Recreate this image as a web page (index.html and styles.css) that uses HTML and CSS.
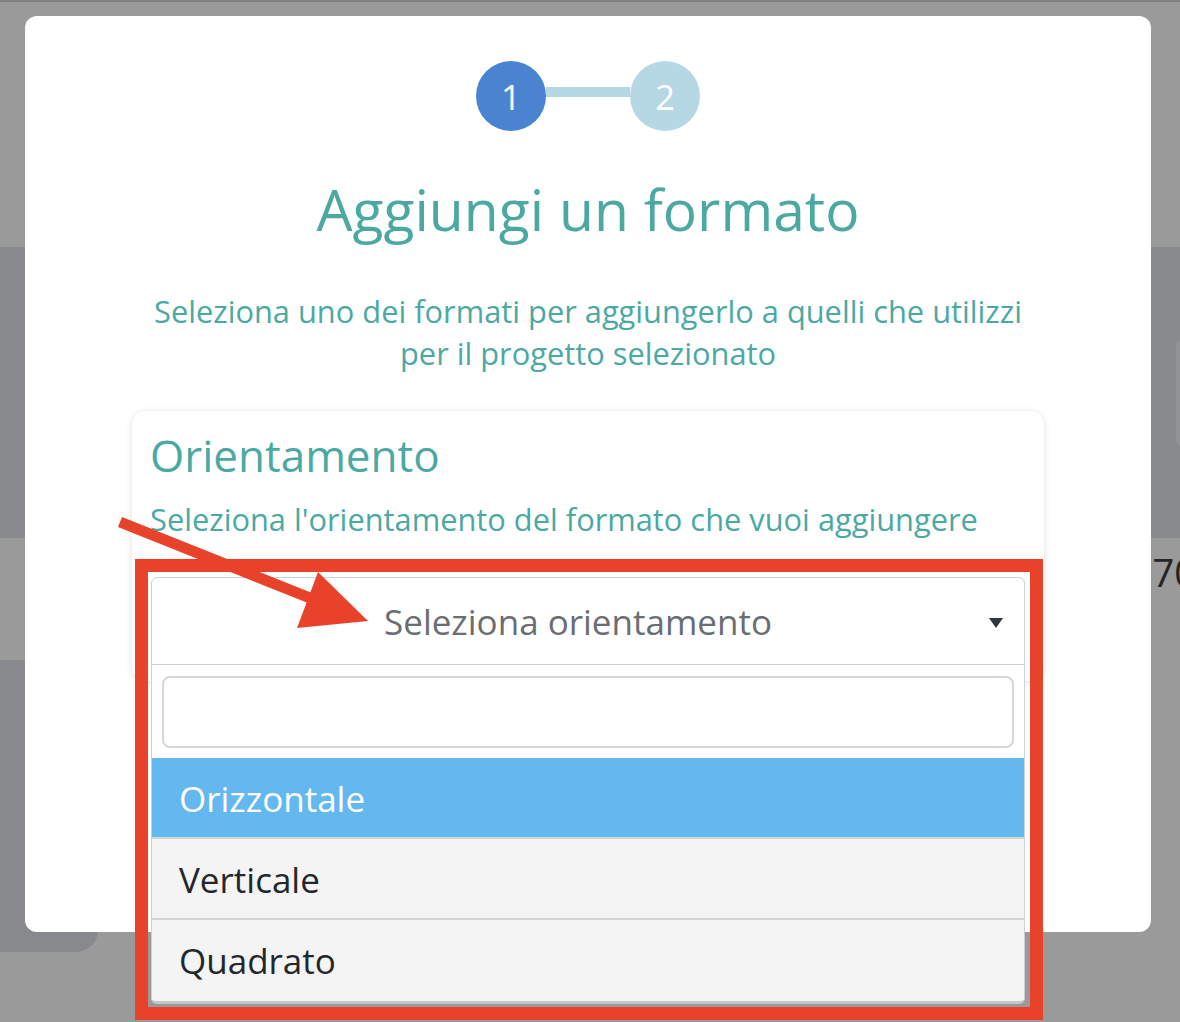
FILE: index.html
```html
<!DOCTYPE html>
<html lang="it">
<head>
    <meta charset="UTF-8">
    <meta name="viewport" content="width=device-width, initial-scale=1.0">
    <title>Aggiungi un formato</title>
    <link rel="stylesheet" href="styles.css">
</head>
<body>
    <!-- page behind the backdrop -->
    <div class="page">
        <div class="page-top"></div>
        <div class="page-hero"><div class="hero-chip"></div></div>
        <div class="page-row"><span class="row-num">70</span></div>
        <div class="page-panel"></div>
    </div>

    <div class="modal">
        <div class="stepper">
            <span class="step active">1</span>
            <span class="step-line"></span>
            <span class="step">2</span>
        </div>

        <h1 class="modal-title">Aggiungi un formato</h1>
        <p class="modal-subtitle">Seleziona uno dei formati per aggiungerlo a quelli che utilizzi per il progetto selezionato</p>

        <div class="card">
            <h2 class="card-title">Orientamento</h2>
            <p class="card-text">Seleziona l'orientamento del formato che vuoi aggiungere</p>

            <div class="select-wrap">
                <div class="select">
                    <span class="select-placeholder">Seleziona orientamento</span>
                    <span class="select-caret"></span>
                </div>
                <div class="dropdown">
                    <div class="dropdown-search"><input type="text"></div>
                    <ul class="options">
                        <li class="option highlighted">Orizzontale</li>
                        <li class="option">Verticale</li>
                        <li class="option">Quadrato</li>
                    </ul>
                </div>
            </div>
        </div>
    </div>

    <!-- annotation drawn over the screenshot -->
    <div class="highlight-box"></div>
    <svg class="arrow" viewBox="0 0 1180 1022" width="1180" height="1022">
        <line x1="120" y1="522" x2="310" y2="598" stroke="#e8432a" stroke-width="11"/>
        <polygon points="368,621 318,572 297,628" fill="#e8432a"/>
    </svg>
</body>
</html>
```

FILE: styles.css
```css
/* General */
* {
    box-sizing: border-box;
}

body {
    margin: 0;
    width: 1180px;
    height: 1022px;
    overflow: hidden;
    position: relative;
    font-family: 'Open Sans', 'Noto Sans', sans-serif;
    background: #9a9a9a;
}

/* Page behind backdrop */
.page-top {
    height: 247px;
    border-top: 2px solid #808080;
    background: #9a9a9a;
}

.page-hero {
    height: 291px;
    background: #88898d;
    display: flex;
    justify-content: flex-end;
    padding-top: 91px;
}

.hero-chip {
    width: 24px;
    height: 109px;
    margin-right: -20px;
    border-radius: 8px;
    background: #929397;
}

.page-row {
    height: 122px;
    display: flex;
    justify-content: flex-end;
    padding-top: 8px;
    background: #9a9a9a;
}

.row-num {
    font-size: 38px;
    color: #242424;
    margin-right: -16px;
}

.page-panel {
    width: 98px;
    height: 292px;
    background: #88898d;
    border-radius: 0 0 22px 0;
}

/* Modal */
.modal {
    position: absolute;
    left: 25px;
    top: 16px;
    width: 1126px;
    height: 916px;
    background: #fff;
    border-radius: 12px;
    padding-top: 45px;
}

.stepper {
    display: flex;
    justify-content: center;
    align-items: center;
}

.step {
    width: 70px;
    height: 70px;
    border-radius: 50%;
    background: #b6d8e4;
    color: #fff;
    font-size: 35px;
    display: flex;
    align-items: center;
    justify-content: center;
}

.step.active {
    background: #4a84d0;
}

.step-line {
    width: 84px;
    height: 10px;
    margin-top: -8px;
    background: #b6d8e4;
}

.modal-title {
    margin: 39px 0 0;
    font-size: 57px;
    font-weight: 400;
    color: #4ba9a2;
    text-align: center;
}

.modal-subtitle {
    max-width: 900px;
    margin: 42px auto 0;
    font-size: 30.8px;
    line-height: 42px;
    color: #4ba9a2;
    text-align: center;
}

/* Card */
.card {
    width: 912px;
    margin: 37px auto 0;
    padding: 14px 19px 16px;
    background: #fff;
    border-radius: 14px;
    box-shadow: 0 1px 7px rgba(0, 0, 0, 0.12);
}

.card-title {
    margin: 0 0 0 -1px;
    font-size: 44px;
    font-weight: 400;
    color: #4ba9a2;
}

.card-text {
    margin: 13px 0 0 -1px;
    font-size: 30.8px;
    color: #4ba9a2;
}

/* Select */
.select-wrap {
    position: relative;
    margin-top: 37px;
}

.select {
    height: 88px;
    border: 1px solid #cdd1d5;
    border-radius: 6px 6px 0 0;
    display: flex;
    align-items: center;
    justify-content: center;
    padding: 0 40px 0 20px;
    position: relative;
}

.select-placeholder {
    font-size: 35px;
    color: #6a6d72;
}

.select-caret {
    position: absolute;
    right: 21px;
    top: 40px;
    width: 0;
    height: 0;
    border-left: 7px solid transparent;
    border-right: 7px solid transparent;
    border-top: 10px solid #31363b;
}

.dropdown {
    position: absolute;
    top: 100%;
    left: 0;
    right: 0;
    z-index: 2;
    background: #fff;
    border-left: 1px solid #cdd1d5;
    border-right: 1px solid #cdd1d5;
    border-bottom: 3px solid #c6c6c6;
    border-radius: 0 0 6px 6px;
    overflow: hidden;
}

.dropdown-search {
    padding: 11px 10px 10px;
}

.dropdown-search input {
    display: block;
    width: 100%;
    height: 72px;
    border: 2px solid #d3d7db;
    border-radius: 8px;
    background: #fff;
    outline: none;
}

.options {
    list-style: none;
    margin: 0;
    padding: 0;
}

.option {
    padding: 2px 27px 0;
    line-height: 77px;
    font-size: 35px;
    color: #23272b;
    background: #f4f4f4;
    border-bottom: 2px solid #d4d4d4;
}

.option:last-child {
    border-bottom: none;
    padding-bottom: 2px;
}

.option.highlighted {
    background: #64b8f0;
    color: #fff;
}

/* Annotation */
.highlight-box {
    position: absolute;
    left: 135px;
    top: 559px;
    width: 908px;
    height: 461px;
    border: 13px solid #e8432a;
    z-index: 5;
}

.arrow {
    position: absolute;
    left: 0;
    top: 0;
    z-index: 6;
    pointer-events: none;
}
```
